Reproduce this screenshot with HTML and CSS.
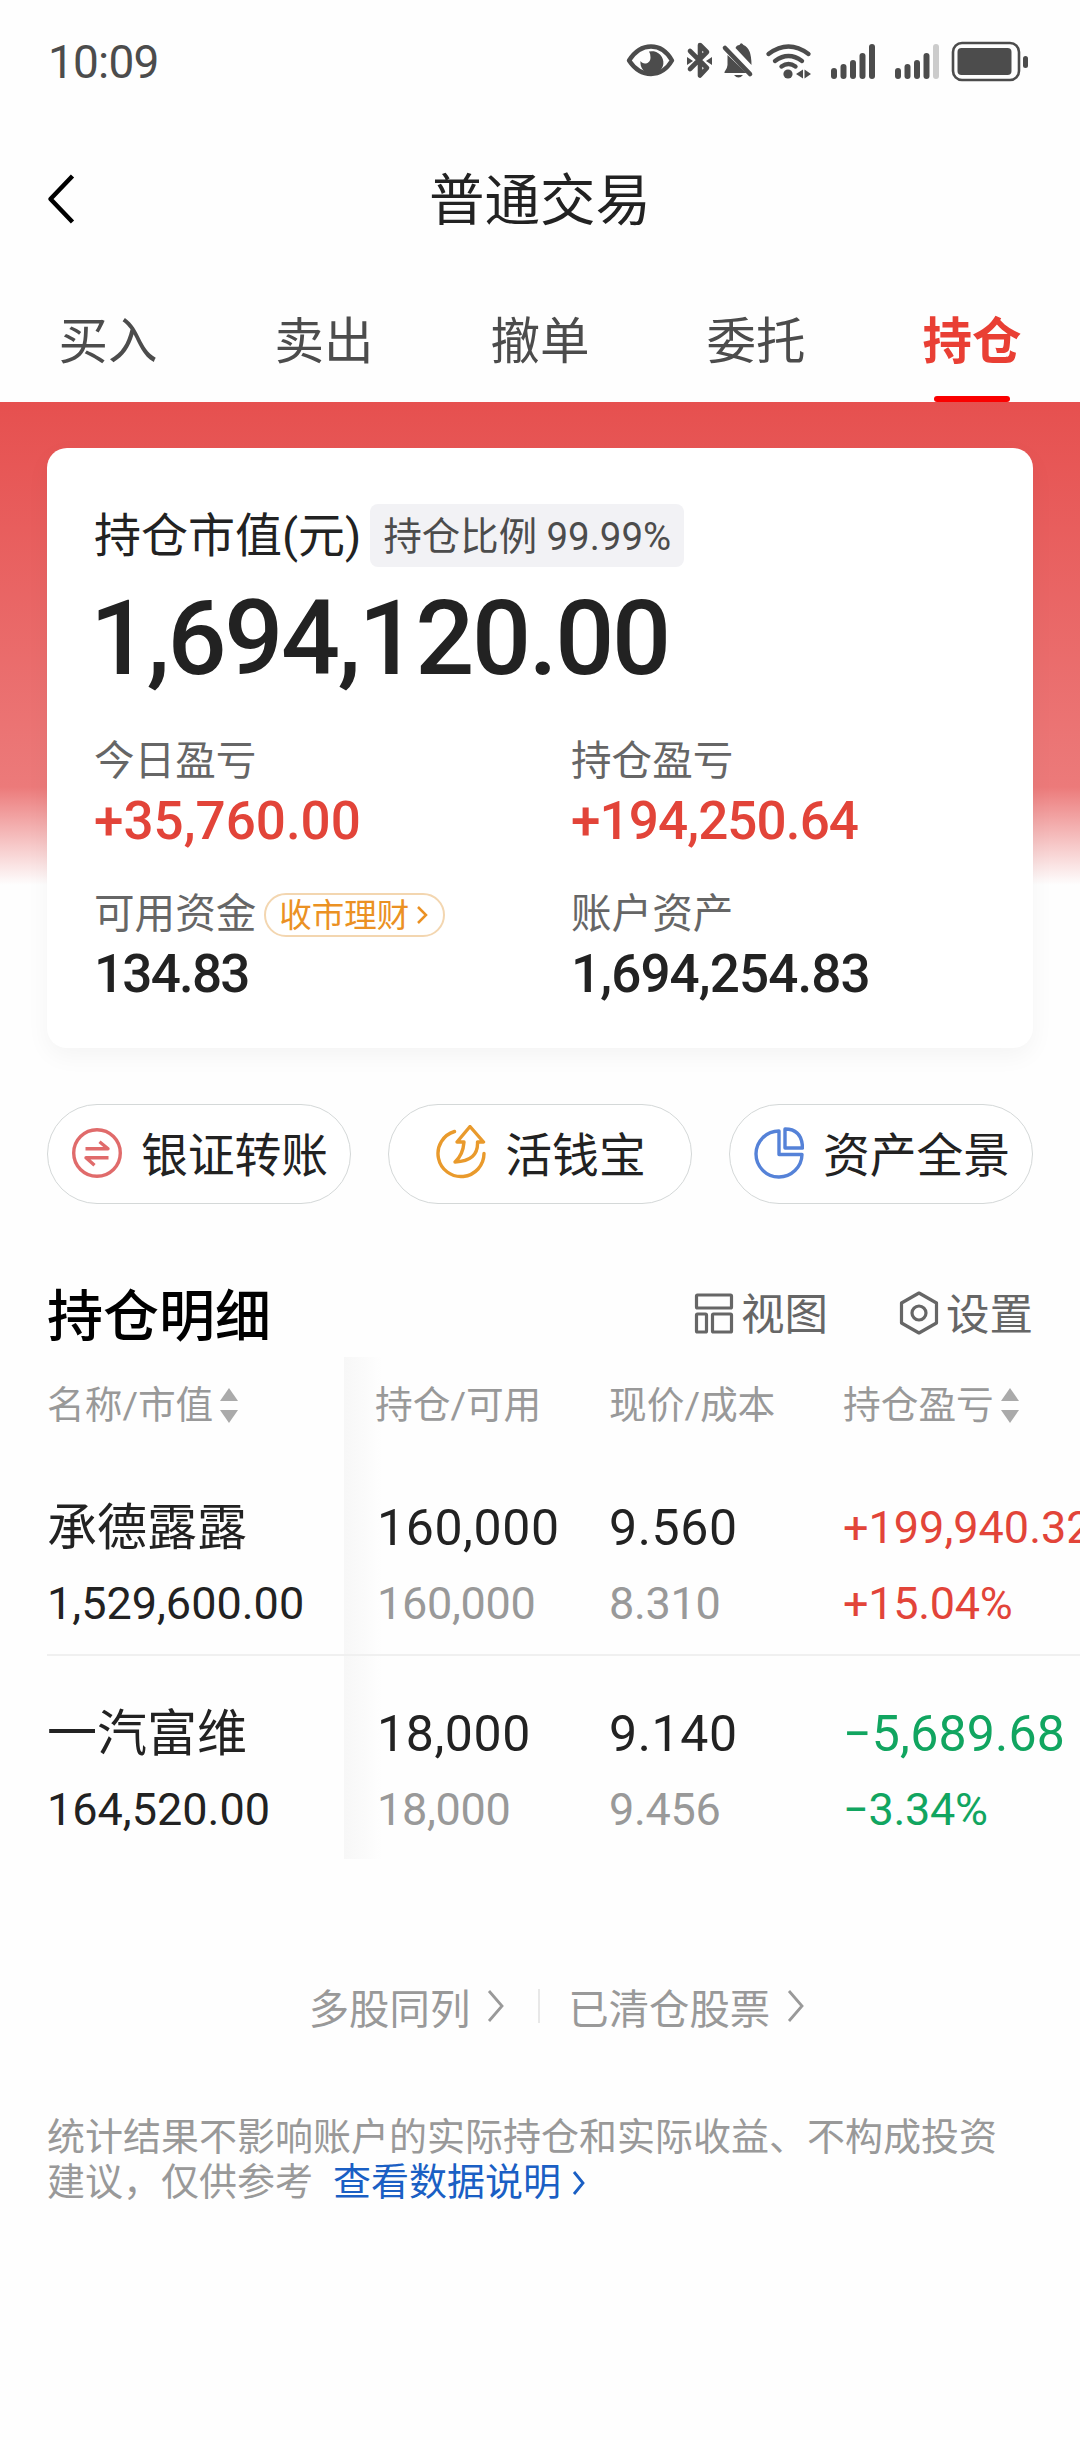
FILE: index.html
```html
<!DOCTYPE html>
<html lang="zh-CN">
<head>
<meta charset="utf-8">
<title>普通交易</title>
<link rel="stylesheet" href="styles.css">
</head>
<body>
<div class="status">
  <div class="clock">10:09</div>
  <svg class="status-icons" width="420" height="50" viewBox="0 0 420 50" fill="#4c4c4c">
    <g fill="none" stroke="#4c4c4c" stroke-width="4.4" stroke-linecap="round" stroke-linejoin="round">
      <path d="M9 25.500Q18 11.500 31 11.500Q44 11.500 52 25.500Q44 39 31 39Q18 39 9 25.500Z"/>
      <path stroke-width="4.600" d="M70 16 87 33l-7 7.500V10l7 7L70 34"/>
      <path stroke-width="4.600" d="M105 13 130 39"/>
      <path d="M148.500 19q20-15 40 0M155 26q13.500-10 27 0M161.500 31.500q7-5 14 0"/>
    </g>
    <path d="M29 16.500a11.500 11.500 0 1 1-8.500 9.500c2 4 10 3.500 10-3.500q0-4-1.500-6ZM67 22l6 4-6 4zM92 22l-6 4 6 4z"/>
    <path d="M107.500 20v10q0 3-3 7v1h22ZM115.500 13q1-3 4-3 1.500-3.500 4 0 8 3 8 20Z"/>
    <path d="M114 40h9q-4.500 5-9 0Z"/>
    <circle cx="168" cy="39" r="4.600"/>
    <path d="M183 34.500v9l-7-4.500zM184.500 34.500v9l6.500-4.500z"/>
    <rect x="211" y="33" width="6" height="11" rx="3"/><rect x="220.500" y="29" width="6" height="15" rx="3"/><rect x="230" y="25" width="6" height="19" rx="3"/><rect x="239.500" y="18" width="6" height="26" rx="3"/><rect x="249" y="9" width="6" height="35" rx="3"/>
    <rect x="275" y="33" width="6" height="11" rx="3"/><rect x="284.500" y="29" width="6" height="15" rx="3"/><rect x="294" y="25" width="6" height="19" rx="3"/><rect x="303.500" y="18" width="6" height="26" rx="3"/><rect x="313" y="9" width="6" height="35" rx="3" fill="#ccc"/>
    <rect x="333" y="8" width="66" height="37" rx="9" fill="none" stroke="#4c4c4c" stroke-width="2.600"/>
    <rect x="337.500" y="13" width="54" height="27" rx="4"/><rect x="403" y="21" width="5" height="12" rx="2.500"/>
  </svg>
</div>
<header class="titlebar">
  <svg class="back" width="30" height="52" viewBox="0 0 30 52"><path d="M25.500 3 3.500 26l22 23" fill="none" stroke="#000" stroke-width="4.500" stroke-linejoin="round"/></svg>
  <h1>普通交易</h1>
</header>
<nav class="tabs"><a>买入</a><a>卖出</a><a>撤单</a><a>委托</a><a class="active">持仓</a></nav>
<section class="hero">
  <div class="card">
    <div class="head"><span class="head-label">持仓市值(元)</span><span class="ratio">持仓比例 <b>99.99%</b></span></div>
    <div class="total">1,694,120.00</div>
    <div class="stats">
      <div><div class="label">今日盈亏</div><div class="value up">+35,760.00</div></div>
      <div><div class="label">持仓盈亏</div><div class="value up tight">+194,250.64</div></div>
      <div><div class="label">可用资金<span class="pill"><span>收市理财</span><svg width="13" height="20" viewBox="0 0 13 20"><path d="M2 2l8 8-8 8" fill="none" stroke="#eb9123" stroke-width="2.500"/></svg></span></div><div class="value tighter">134.83</div></div>
      <div><div class="label">账户资产</div><div class="value tight">1,694,254.83</div></div>
    </div>
  </div>
</section>
<div class="actions">
  <button><svg width="50" height="54" viewBox="0 0 50 54" fill="none" stroke="#e06b6b" stroke-width="3.400"><circle cx="25" cy="28" r="23.300"/><path d="M13.500 23.800H36l-8.500-7M36.500 32.800H14l8.500 7.500" stroke-linejoin="round"/></svg><span>银证转账</span></button>
  <button><svg width="50" height="54" viewBox="0 0 50 54" fill="none" stroke="#e99a2c" stroke-width="3.400" stroke-linecap="round" stroke-linejoin="round"><path d="M18.500 6.500A23 23 0 1 0 48 28.500"/><path d="M34 1.500 47.500 17h-6q1 19-22.500 20 8-7 9-20h-7Z"/></svg><span>活钱宝</span></button>
  <button><svg width="50" height="54" viewBox="0 0 50 54" fill="none" stroke="#5582d8" stroke-width="3.400" stroke-linejoin="round"><path d="M25 6A23 23 0 1 0 48 29.500H25Z"/><path d="M31 4v19h17.500Q48 4 31 4Z"/></svg><span>资产全景</span></button>
</div>
<div class="section-head">
  <h2>持仓明细</h2>
  <a><svg width="40" height="44" viewBox="0 0 40 44" fill="none" stroke="#666" stroke-width="3.200"><rect x="2.500" y="4" width="35" height="13" rx="1"/><rect x="2.500" y="23" width="10" height="18" rx="1"/><rect x="18.500" y="23" width="19" height="18" rx="1"/></svg><span>视图</span></a>
  <a><svg width="40" height="44" viewBox="0 0 40 44" fill="none" stroke="#666" stroke-width="3.200" stroke-linejoin="round"><path d="M20 2 37.500 12v20L20 42 2.500 32V12Z"/><circle cx="20" cy="22" r="7"/></svg><span>设置</span></a>
</div>
<div class="holdings">
  <div class="row thead"><div>名称/市值<i class="sort"></i></div><div>持仓/可用</div><div>现价/成本</div><div>持仓盈亏<i class="sort"></i></div></div>
  <div class="row">
    <div><p class="name">承德露露</p><p class="mv">1,529,600.00</p></div>
    <div><p class="num">160,000</p><p class="sub">160,000</p></div>
    <div><p class="num">9.560</p><p class="sub">8.310</p></div>
    <div class="up"><p class="num small">+199,940.32</p><p class="sub">+15.04%</p></div>
  </div>
  <div class="row">
    <div><p class="name">一汽富维</p><p class="mv">164,520.00</p></div>
    <div><p class="num">18,000</p><p class="sub">18,000</p></div>
    <div><p class="num">9.140</p><p class="sub">9.456</p></div>
    <div class="down"><p class="num">−5,689.68</p><p class="sub">−3.34%</p></div>
  </div>
</div>
<div class="links">
  <a>多股同列<svg width="20" height="34" viewBox="0 0 20 34"><path d="M3 2l13 15L3 32" fill="none" stroke="#999" stroke-width="2.800"/></svg></a>
  <i class="divider"></i>
  <a>已清仓股票<svg width="20" height="34" viewBox="0 0 20 34"><path d="M3 2l13 15L3 32" fill="none" stroke="#999" stroke-width="2.800"/></svg></a>
</div>
<p class="note">统计结果不影响账户的实际持仓和实际收益、不构成投资<br>建议，仅供参考<a>查看数据说明<svg width="16" height="26" viewBox="0 0 16 26"><path d="M3 2l9 11-9 11" fill="none" stroke="#1a5fc4" stroke-width="2.800"/></svg></a></p>
</body>
</html>
```
FILE: styles.css
```css
* { box-sizing: border-box; }
body { margin: 0; width: 1080px; height: 2440px; overflow: hidden; background: #fefefe; color: #222; font-family: Roboto, "Noto Sans CJK SC", sans-serif; }
h1, h2, p { margin: 0; font-weight: 400; }
svg { display: block; flex: none; }

.status { height: 122px; padding: 37px 40px 0 48px; display: flex; justify-content: space-between; color: #4c4c4c; }
.clock { font-size: 46px; line-height: 50px; letter-spacing: -.8px; }
.status-icons { margin-top: -2px; }
.titlebar { height: 156px; display: grid; grid-template-columns: 120px 1fr 120px; align-items: center; }
.back { margin: 0 0 2px 47px; }
.titlebar h1 { padding-top: 3px; text-align: center; font-size: 55.5px; line-height: 80px; }

.tabs { height: 124px; display: grid; grid-template-columns: repeat(5, 1fr); text-align: center; font-size: 49.5px; line-height: 128px; color: #4c4c4c; }
.tabs a.active { color: #e93f34; font-weight: 700; display: flex; flex-direction: column; align-items: center; }
.tabs a.active::after { content: ""; width: 76px; height: 6px; margin-top: -10px; border-radius: 3px; background: #fa0000; }

.hero { height: 702px; padding: 46px 47px 0; background: linear-gradient(#e6504f 0, #ec7a7a 385px, #fefefe 483px); }
.card { height: 600px; border-radius: 20px; background: #fff; padding: 55px 48px 0; box-shadow: 0 8px 24px rgba(0, 0, 0, .045); }
.head { display: flex; align-items: center; gap: 9px; height: 64px; white-space: nowrap; }
.head-label { margin-left: -1px; padding-top: 2px; font-size: 47px; line-height: 62px; }
.ratio { height: 63px; padding: 0 13px; border-radius: 8px; background: #f2f2f5; color: #4c4c4c; font-size: 38.4px; line-height: 65px; }
.ratio b { font-weight: 400; }
.total { margin: 7px 0 0 -5px; font-size: 104px; line-height: 130px; font-weight: 500; letter-spacing: -2.4px; }
.stats { display: grid; grid-template-columns: 477px 1fr; grid-auto-rows: 153px; margin: 24px 0 0 -1px; }
.label { display: flex; align-items: center; height: 61px; font-size: 40.6px; line-height: 58px; padding-top: 4px; color: #666; }
.value { font-size: 53px; line-height: 64px; font-weight: 500; }
.tight { letter-spacing: -.9px; }
.tighter { letter-spacing: -1.8px; }
.up, .up .num, .up .sub { color: #e24439; }
.down, .down .num, .down .sub { color: #11a560; }
.pill { display: flex; align-items: center; gap: 7px; margin: 3px 0 0 8px; height: 44px; padding: 0 14px 0 13px; border: 2px solid #f3d6b0; border-radius: 22px; color: #eb9123; font-size: 32.5px; }
.pill span { line-height: 40px; padding-top: 1px; }

.actions { display: grid; grid-template-columns: repeat(3, 304px); gap: 37px; padding: 0 47px; }
.actions button { display: flex; align-items: center; justify-content: center; gap: 19px; height: 100px; padding: 0 0 5px 2px; border: 1px solid #d4d8d8; border-radius: 50px; background: #fff; color: #222; font: inherit; font-size: 46.8px; }

.section-head { display: flex; align-items: center; height: 90px; margin-top: 63px; padding: 0 47px; }
.section-head h2 { margin-right: auto; padding-bottom: 2px; font-size: 56px; font-weight: 500; color: #000; }
.section-head a { display: flex; align-items: center; gap: 7px; margin-left: 71px; padding-top: 2px; font-size: 43.5px; color: #666; }
.section-head a span { padding-bottom: 3px; }

.holdings { position: relative; height: 502px; }
.holdings::before { content: ""; position: absolute; left: 344px; top: 0; width: 38px; height: 502px; background: linear-gradient(90deg, #f7f7f7, #fefefe); z-index: -1; }
.row { display: grid; grid-template-columns: 330px 232px 234px 237px; width: 1033px; height: 205px; margin-left: 47px; white-space: nowrap; }
.thead { height: 93px; font-size: 37.7px; line-height: 97px; color: #999; }
.thead div { display: flex; align-items: center; }
.thead div:nth-child(2) { margin-left: -2px; }
.sort { display: grid; gap: 9px; margin-left: 7px; }
.sort::before, .sort::after { content: ""; border: solid transparent; border-width: 0 9px 13px; border-bottom-color: #aaa; }
.sort::after { transform: rotate(180deg); }
.row + .row + .row { height: 204px; margin-top: -1px; border-top: 2px solid #f0f0f0; }
.row p { line-height: 76px; }
.name, .num { font-size: 50px; padding-top: 40px; height: 116px; }
.num { letter-spacing: .6px; }
.down .num { letter-spacing: .2px; }
.num.small { font-size: 45px; letter-spacing: 0; }
.mv, .sub { font-size: 45px; }
.sub { color: #999; letter-spacing: -.3px; }

.links { display: flex; justify-content: center; align-items: center; margin: 114px 0 0 35px; height: 66px; font-size: 40.4px; color: #999; }
.links a { display: flex; align-items: center; gap: 16px; }
.divider { width: 2px; height: 34px; margin: 0 28px 0 32px; background: #e8e8e8; }
.note { margin-top: 76px; padding-left: 47px; font-size: 38px; line-height: 45px; color: #999; white-space: nowrap; }
.note a { display: inline-flex; align-items: center; gap: 10px; margin-left: 20px; color: #1a5fc4; }
```
